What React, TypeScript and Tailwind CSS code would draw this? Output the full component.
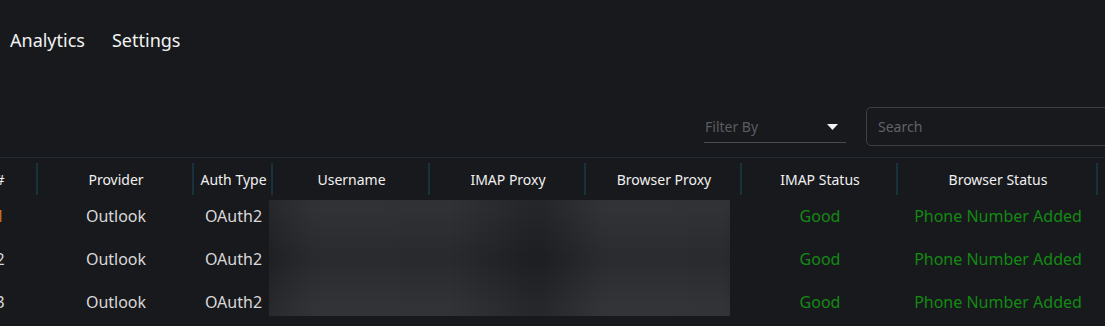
import React from "react";

const cols = [
  { label: "#", w: "w-[76px]" },
  { label: "Provider", w: "w-[156px]" },
  { label: "Auth Type", w: "w-[79px]" },
  { label: "Username", w: "w-[157px]" },
  { label: "IMAP Proxy", w: "w-[156px]" },
  { label: "Browser Proxy", w: "w-[156px]" },
  { label: "IMAP Status", w: "w-[156px]" },
  { label: "Browser Status", w: "w-[200px]" },
];

const rows = [1, 2, 3];

export default function App() {
  return (
    <div
      className="w-[1105px] h-[326px] overflow-hidden bg-[#18191d] text-[#e6e6e6]"
      style={{ fontFamily: "'Noto Sans', sans-serif" }}
    >
      <nav className="flex gap-[27px] pl-[10px] pt-[27px] h-[60px] text-[18px] leading-[26px] text-[#f2f2f2]">
        <span>Analytics</span>
        <span>Settings</span>
      </nav>
      <div className="flex items-end justify-end h-[86px]">
        <div className="flex items-center justify-between w-[142px] h-[32px] border-b border-[#4a4b50] pl-[1px] pr-[8px] mr-[20px] mb-[3px]">
          <span className="text-[14px] text-[#5a5c61]">Filter By</span>
          <svg width="11" height="6" viewBox="0 0 11 6">
            <path d="M0 0 L11 0 L5.5 6 Z" fill="#f2f2f2" />
          </svg>
        </div>
        <div className="w-[250px] h-[39px] border border-[#3e3f44] rounded-[5px] flex items-center pl-[11px] -mr-[11px]">
          <span className="text-[14px] text-[#606268]">Search</span>
        </div>
      </div>
      <div className="h-[11px]" />
      <div className="relative -ml-[38px] border-t border-[#1f2a33]">
        <div className="flex h-[36px] items-start pt-[5px]">
          {cols.map((c, i) => (
            <div key={i} className={`${c.w} flex items-center h-[32px] relative`}>
              <span className="flex-1 text-center text-[14px] text-[#f0f0f0]">{c.label}</span>
              <span className="absolute right-0 top-0 h-[32px] w-[2px] bg-[#17323d]" />
            </div>
          ))}
        </div>
        {rows.map((r) => (
          <div key={r} className="flex h-[43px] items-center">
            <div className={`w-[76px] text-center text-[16px] ${r === 1 ? "text-[#c8741c]" : "text-[#d8d8d8]"}`}>{r}</div>
            <div className="w-[156px] text-center text-[16px] text-[#d8d8d8]">Outlook</div>
            <div className="w-[79px] text-center text-[16px] text-[#d8d8d8]">OAuth2</div>
            <div className="w-[469px]" />
            <div className="w-[156px] text-center text-[16px] text-[#138a13]">Good</div>
            <div className="w-[200px] text-center text-[16px] text-[#138a13]">Phone Number Added</div>
          </div>
        ))}
        <div className="absolute left-[307px] top-[42px] w-[461px] h-[116px] overflow-hidden">
          <div
            className="absolute inset-[-10px] blur-[8px]"
            style={{
              background:
                "linear-gradient(90deg, #1f2024 0%, #2c2d31 12%, #2b2c30 40%, #1e1f23 58%, #2d2e32 72%, #2c2d31 100%)",
            }}
          />
          <div
            className="absolute inset-0"
            style={{
              background:
                "linear-gradient(180deg, rgba(255,255,255,0.03) 0%, rgba(0,0,0,0.06) 50%, rgba(255,255,255,0.04) 100%)",
            }}
          />
        </div>
      </div>
    </div>
  );
}
